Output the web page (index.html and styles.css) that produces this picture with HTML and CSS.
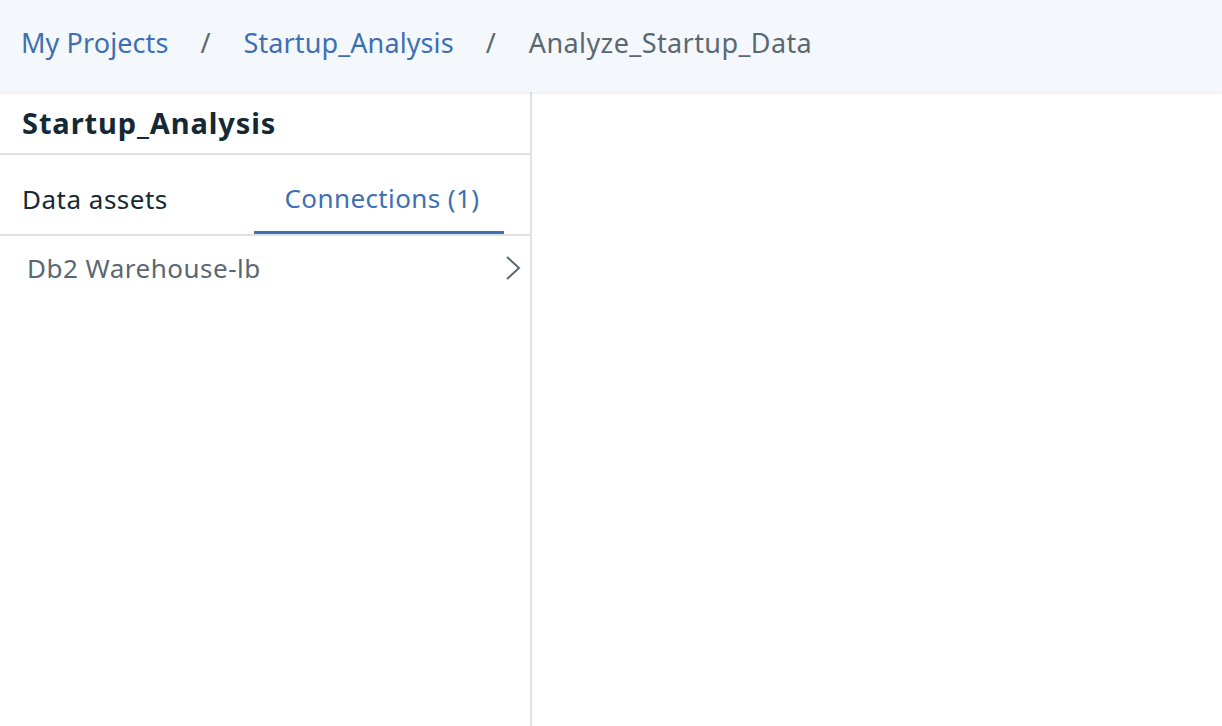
FILE: index.html
```html
<!DOCTYPE html>
<html>
<head>
<meta charset="utf-8">
<link rel="stylesheet" href="styles.css">
</head>
<body>
<header class="topbar">
  <nav class="crumbs">
    <a class="crumb link">My Projects</a>
    <span class="sep">/</span>
    <a class="crumb link">Startup_Analysis</a>
    <span class="sep">/</span>
    <span class="crumb current">Analyze_Startup_Data</span>
  </nav>
</header>
<main class="main">
  <aside class="panel">
    <h1 class="title">Startup_Analysis</h1>
    <div class="tabs">
      <div class="tab">Data assets</div>
      <div class="tab active">Connections (1)</div>
    </div>
    <div class="row">
      <span class="row-label">Db2 Warehouse-lb</span>
      <svg class="chev" width="18" height="26" viewBox="0 0 18 26"><path d="M3 2 L15 13 L3 24" fill="none" stroke="#5a6872" stroke-width="2"/></svg>
    </div>
  </aside>
  <section class="canvas"></section>
</main>
</body>
</html>
```
FILE: styles.css
```css
* { box-sizing: border-box; }
html, body { margin: 0; padding: 0; height: 100%; }
body {
  font-family: "Noto Sans", "Open Sans", sans-serif;
  background: #fff;
  overflow: hidden;
}
.topbar {
  height: 92px;
  background: #f4f7fb;
  box-shadow: 0 1px 3px rgba(0,0,0,0.10);
  display: flex;
  align-items: center;
  padding-left: 21px;
  padding-bottom: 8px;
  position: relative;
  z-index: 1;
}
.crumbs { display: flex; align-items: center; font-size: 27px; }
.crumb.link { color: #3d70b2; letter-spacing: 0.1px; }
.crumb.current { color: #5a6872; letter-spacing: 0.4px; }
.sep { color: #5a6872; margin: 0 33px 0 32px; }
.main { display: flex; height: calc(100% - 92px); }
.panel {
  width: 532px;
  border-right: 2px solid #dfe3e6;
  display: flex;
  flex-direction: column;
}
.title {
  margin: 0;
  height: 63px;
  font-size: 29px;
  font-weight: 700;
  color: #152935;
  padding: 13px 0 0 22px;
  border-bottom: 2px solid #dfe3e6;
  line-height: 36px;
  letter-spacing: 0.9px;
}
.tabs {
  display: flex;
  height: 81px;
  border-bottom: 2px solid #dfe3e6;
  padding-right: 26px;
}
.tab {
  font-size: 26px;
  color: #152935;
  display: flex;
  align-items: center;
  padding-top: 9px;
  letter-spacing: 0.5px;
}
.tab:first-child { padding-left: 22px; width: 254px; }
.tab.active {
  flex: 1;
  justify-content: center;
  padding-left: 6px;
  color: #3d70b2;
  border-bottom: 3px solid #3d70b2;
  letter-spacing: 0.4px;
}
.row {
  display: flex;
  align-items: center;
  justify-content: space-between;
  height: 64px;
  padding: 0 8px 0 27px;
}
.row-label { font-size: 26px; color: #5a6872; letter-spacing: 0.5px; }
.chev { display: block; }
.canvas { flex: 1; }
```
